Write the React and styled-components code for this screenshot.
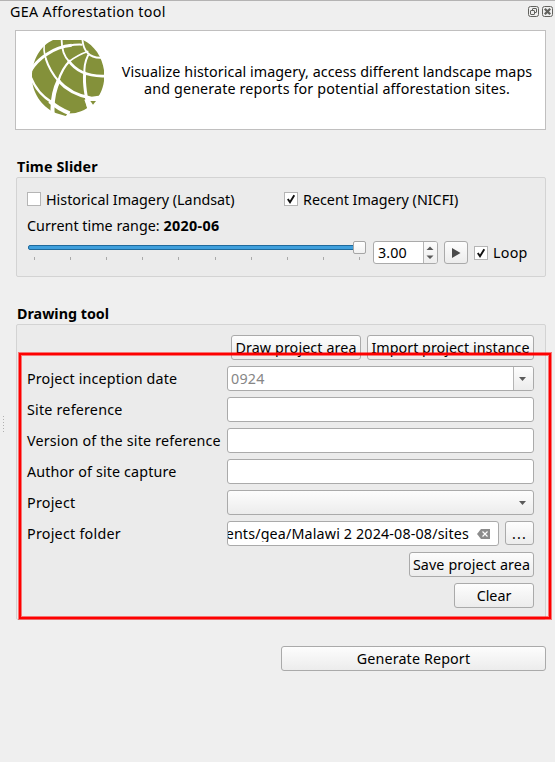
import React from "react";
import styled, { createGlobalStyle } from "styled-components";

const Global = createGlobalStyle`
  * { box-sizing: border-box; }
  body {
    margin: 0;
    background: #efefef;
    font-family: "Noto Sans", "Open Sans", sans-serif;
    font-size: 14.3px;
    line-height: 17px;
    color: #000;
    overflow: hidden;
  }
`;

const Text = styled.span`
  white-space: pre;
  letter-spacing: ${(p) => p.$ls || 0}px;
  font-weight: ${(p) => (p.$bold ? 700 : 400)};
`;

const Dock = styled.main`
  position: relative;
  width: 555px;
  height: 762px;
  border-top: 1px solid #b4b3b3;
  padding: 0 9px 0 15px;
  background: #efefef;
`;

const TitleBar = styled.header`
  display: flex;
  align-items: center;
  justify-content: space-between;
  height: 21px;
  margin: 0 -8px 8px -5px;
`;

const TitleButtons = styled.div`
  display: flex;
  gap: 2px;
`;

const Card = styled.section`
  display: flex;
  height: 100px;
  border: 1px solid #c0bfbf;
  background: #fff;
`;

const LogoBox = styled.div`
  padding: 9px 0 0 16px;
  width: 105px;
  svg { display: block; }
`;

const Intro = styled.p`
  flex: 1;
  margin: 32px 12px 0 0;
  display: flex;
  flex-direction: column;
  align-items: center;
  line-height: 17px;
`;

const Heading = styled.h2`
  margin: ${(p) => p.$top}px 0 0 2px;
  height: 19px;
  font-size: 14.3px;
  line-height: 17px;
`;

const Group = styled.section`
  height: ${(p) => p.$h}px;
  margin-left: 1px;
  padding: 10px 11px 0 10px;
  border: 1px solid #d3d3d3;
  border-radius: 2px;
  background: #ebebeb;
`;

const CheckRow = styled.div`
  display: grid;
  grid-template-columns: 257px 1fr;
  height: 22px;
  align-items: center;
`;

const CheckLabel = styled.label`
  display: flex;
  align-items: center;
  gap: 5px;
`;

const CheckBox = styled.span`
  display: flex;
  width: 14px;
  height: 14px;
  border: 1px solid #b5b5b5;
  background: #fff;
`;

const RangeLine = styled.div`
  height: 31px;
  padding-top: 7px;
`;

const PlayerRow = styled.div`
  display: flex;
  height: 23px;
  align-items: center;
`;

const Slider = styled.div`
  width: 339px;
  height: 23px;
  margin: 0 7px 0 0;
  display: flex;
  flex-direction: column;
`;

const Track = styled.div`
  position: relative;
  width: 336px;
  height: 5px;
  margin: 4px 0 7px 1px;
  border: 1px solid #1f6a9c;
  border-radius: 2px;
  background: #3f9fdc;
`;

const Handle = styled.span`
  position: absolute;
  right: -3px;
  top: -5px;
  width: 13px;
  height: 13px;
  border: 1px solid #a5a5a5;
  border-radius: 2px;
  background: linear-gradient(#fff, #f1f1f1);
`;

const Ticks = styled.div`
  display: flex;
  justify-content: space-between;
  width: 326px;
  margin-left: 7px;
`;

const Tick = styled.i`
  width: 1px;
  height: 3px;
  background: #a9a9a9;
`;

const Spin = styled.div`
  display: flex;
  width: 65px;
  height: 23px;
  border: 1px solid #aaa;
  border-radius: 3px;
  background: #fff;
  overflow: hidden;
`;

const SpinValue = styled.span`
  flex: 1;
  padding: 2px 0 0 4px;
`;

const SpinArrows = styled.span`
  width: 14px;
  border-left: 1px solid #b5b5b5;
  background: linear-gradient(#fcfcfc, #eee);
  svg { display: block; }
`;

const Button = styled.button`
  display: flex;
  align-items: center;
  justify-content: center;
  width: ${(p) => p.$w}px;
  height: ${(p) => p.$h || 25}px;
  padding: 0;
  border: 1px solid #aaa;
  border-radius: 3px;
  background: linear-gradient(#fdfdfd, #ececec);
  font: inherit;
  color: #000;
`;

const PlayButton = styled(Button)`
  margin: 0 6px;
`;

const Form = styled.div`
  display: flex;
  flex-direction: column;
  gap: 6px;
`;

const Actions = styled.div`
  display: flex;
  justify-content: flex-end;
  gap: 6px;
`;

const Field = styled.div`
  display: grid;
  grid-template-columns: 200px 1fr;
  height: 25px;
  align-items: center;
`;

const Input = styled.div`
  display: flex;
  align-items: center;
  flex: 1;
  height: 25px;
  border: 1px solid #aaa;
  border-radius: 3px;
  overflow: hidden;
  background: ${(p) => (p.$combo ? "linear-gradient(#fdfdfd, #ececec)" : "#fff")};
  justify-content: ${(p) => (p.$combo ? "flex-end" : "space-between")};
`;

const Placeholder = styled.span`
  padding-left: 3px;
  color: #868686;
`;

const ArrowCell = styled.span`
  display: flex;
  align-items: center;
  justify-content: center;
  width: 20px;
  height: 23px;
  padding-right: 3px;
  border-left: 1px solid ${(p) => (p.$plain ? "transparent" : "#b5b5b5")};
  background: ${(p) => (p.$plain ? "none" : "linear-gradient(#fdfdfd, #ececec)")};
`;

const Picker = styled.div`
  display: flex;
  gap: 6px;
`;

const PathClip = styled.span`
  display: flex;
  justify-content: flex-end;
  width: 241px;
  overflow: hidden;
`;

const ClearIcon = styled.svg`
  margin-right: 8px;
`;

const Footer = styled.footer`
  display: flex;
  justify-content: flex-end;
  margin-top: 26px;
`;

const Highlight = styled.div`
  position: absolute;
  left: 19px;
  top: 352px;
  width: 532px;
  height: 266px;
  border: 2px solid #fe0000;
  box-shadow: 0 0 0 1px rgba(255, 0, 0, 0.5), inset 0 0 0 1px rgba(255, 0, 0, 0.5);
  pointer-events: none;
`;

const Grip = styled.div`
  position: absolute;
  left: 3px;
  top: 415px;
  width: 1px;
  height: 17px;
  background: repeating-linear-gradient(#b0b0b0 0 1px, transparent 1px 3px);
`;

const Globe = () => (
  <svg width="72" height="77" viewBox="21 15 216 231">
    <path fill="#84913a" d="M84 15H174C212 33 238 75 238 122C238 185 190 236 129 236L122 243L92 234C48 214 21 172 21 126C21 75 46 32 84 15Z" />
    <g fill="none" stroke="#fff">
      <path strokeWidth="9" d="M14 112C35 72 85 36 140 31" />
      <path strokeWidth="6" d="M130 32Q152 28 172 29" />
      <path strokeWidth="5" d="M60 20C54 38 57 54 63 72" />
      <path strokeWidth="6" d="M62 70Q74 108 102 140" />
      <path strokeWidth="9" d="M98 135C125 166 160 183 200 190L242 184" />
      <path strokeWidth="5.5" d="M110 10C109 42 115 62 132 79" />
      <path strokeWidth="8" d="M130 76C153 110 190 126 244 123" />
      <path strokeWidth="5.5" d="M172 10C174 48 193 70 230 68" />
      <path strokeWidth="5" d="M190 49Q158 60 132 80" />
      <path strokeWidth="7" d="M134 78Q111 101 100 138" />
      <path strokeWidth="12" d="M102 134Q77 185 84 250" />
      <path strokeWidth="6" d="M190 59Q175 90 179 119" />
      <path strokeWidth="9" d="M179 116Q175 160 196 240" />
      <path strokeWidth="7" d="M18 128Q36 174 80 202" />
      <path strokeWidth="12" d="M74 199Q100 222 134 235" />
    </g>
    <path fill="#fff" d="M178 194L220 187L242 153V246H126V236Q165 237 188 222Z" />
    <path fill="#84913a" d="M196 198H213L204 209Z" />
  </svg>
);

const FloatIcon = () => (
  <svg width="12" height="12" fill="none" stroke="#62625e">
    <rect x=".5" y=".5" width="10" height="10" rx="2" />
    <rect x="4.5" y="2.5" width="4" height="4" rx=".5" />
    <rect x="2.5" y="4.5" width="4" height="4" rx=".5" fill="#efefef" />
  </svg>
);

const CloseIcon = () => (
  <svg width="12" height="12" fill="none" stroke="#62625e">
    <rect x=".5" y=".5" width="10" height="10" rx="2" />
    <path d="M2.8 2.8L8.2 8.2M8.2 2.8L2.8 8.2" strokeWidth="2.3" />
  </svg>
);

const Down = () => (
  <svg width="7" height="4"><path d="M0 0H7L3.5 4Z" fill="#5a5a5a" /></svg>
);

const Check = ({ on, ls, children }) => (
  <CheckLabel>
    <CheckBox>
      {on && (
        <svg width="12" height="12">
          <path d="M2.8 6L5 9.3L9.3 2.2" fill="none" stroke="#111" strokeWidth="1.9" />
        </svg>
      )}
    </CheckBox>
    <Text $ls={ls}>{children}</Text>
  </CheckLabel>
);

export default function App() {
  return (
    <>
      <Global />
      <Dock>
        <TitleBar>
          <Text $ls={0.32}>GEA Afforestation tool</Text>
          <TitleButtons><FloatIcon /><CloseIcon /></TitleButtons>
        </TitleBar>
        <Card>
          <LogoBox><Globe /></LogoBox>
          <Intro>
            <Text $ls={0.06}>Visualize historical imagery, access different landscape maps</Text>
            <Text $ls={0.14}>and generate reports for potential afforestation sites.</Text>
          </Intro>
        </Card>

        <Heading $top={28}><Text $bold $ls={0.15}>Time Slider</Text></Heading>
        <Group $h={100}>
          <CheckRow>
            <Check>Historical Imagery (Landsat)</Check>
            <Check on>Recent Imagery (NICFI)</Check>
          </CheckRow>
          <RangeLine>
            <Text $ls={0.02}>Current time range: </Text><Text $bold $ls={0.35}>2020-06</Text>
          </RangeLine>
          <PlayerRow>
            <Slider>
              <Track><Handle /></Track>
              <Ticks>{Array.from({ length: 10 }, (_, i) => <Tick key={i} />)}</Ticks>
            </Slider>
            <Spin>
              <SpinValue><Text $ls={0.1}>3.00</Text></SpinValue>
              <SpinArrows>
                <svg width="13" height="21" fill="#5a5a5a">
                  <path d="M2.5 8H9.5L6 4.5ZM2.5 13.5H9.5L6 17Z" />
                </svg>
              </SpinArrows>
            </Spin>
            <PlayButton $w={24} $h={23}>
              <svg width="10" height="10"><path d="M1 0L9.5 5L1 10Z" fill="#4a4a4a" /></svg>
            </PlayButton>
            <Check on ls={0.25}>Loop</Check>
          </PlayerRow>
        </Group>

        <Heading $top={28}><Text $bold>Drawing tool</Text></Heading>
        <Group $h={296}>
          <Form>
            <Actions>
              <Button $w={130}><Text $ls={0.11}>Draw project area</Text></Button>
              <Button $w={167}><Text $ls={0.04}>Import project instance</Text></Button>
            </Actions>
            <Field>
              <Text $ls={0.16}>Project inception date</Text>
              <Input>
                <Placeholder><Text $ls={0.2}>0924</Text></Placeholder>
                <ArrowCell><Down /></ArrowCell>
              </Input>
            </Field>
            <Field><Text $ls={0.21}>Site reference</Text><Input /></Field>
            <Field><Text $ls={0.18}>Version of the site reference</Text><Input /></Field>
            <Field><Text $ls={0.14}>Author of site capture</Text><Input /></Field>
            <Field>
              <Text $ls={0.25}>Project</Text>
              <Input $combo><ArrowCell $plain><Down /></ArrowCell></Input>
            </Field>
            <Field>
              <Text $ls={0.25}>Project folder</Text>
              <Picker>
                <Input>
                  <PathClip><Text $ls={0.15}>ents/gea/Malawi 2 2024-08-08/sites</Text></PathClip>
                  <ClearIcon width="13" height="10">
                    <path d="M0 5L4 0H13V10H4Z" fill="#8c8c8c" />
                    <path d="M5.5 2.5L10.5 7.5M10.5 2.5L5.5 7.5" stroke="#fff" strokeWidth="1.2" />
                  </ClearIcon>
                </Input>
                <Button $w={29} $h={24}><Text $ls={1.2}>...</Text></Button>
              </Picker>
            </Field>
            <Actions><Button $w={125}><Text $ls={0.12}>Save project area</Text></Button></Actions>
            <Actions><Button $w={80}><Text>Clear</Text></Button></Actions>
          </Form>
        </Group>
        <Footer><Button $w={265}><Text $ls={0.13}>Generate Report</Text></Button></Footer>
        <Highlight />
        <Grip />
      </Dock>
    </>
  );
}
